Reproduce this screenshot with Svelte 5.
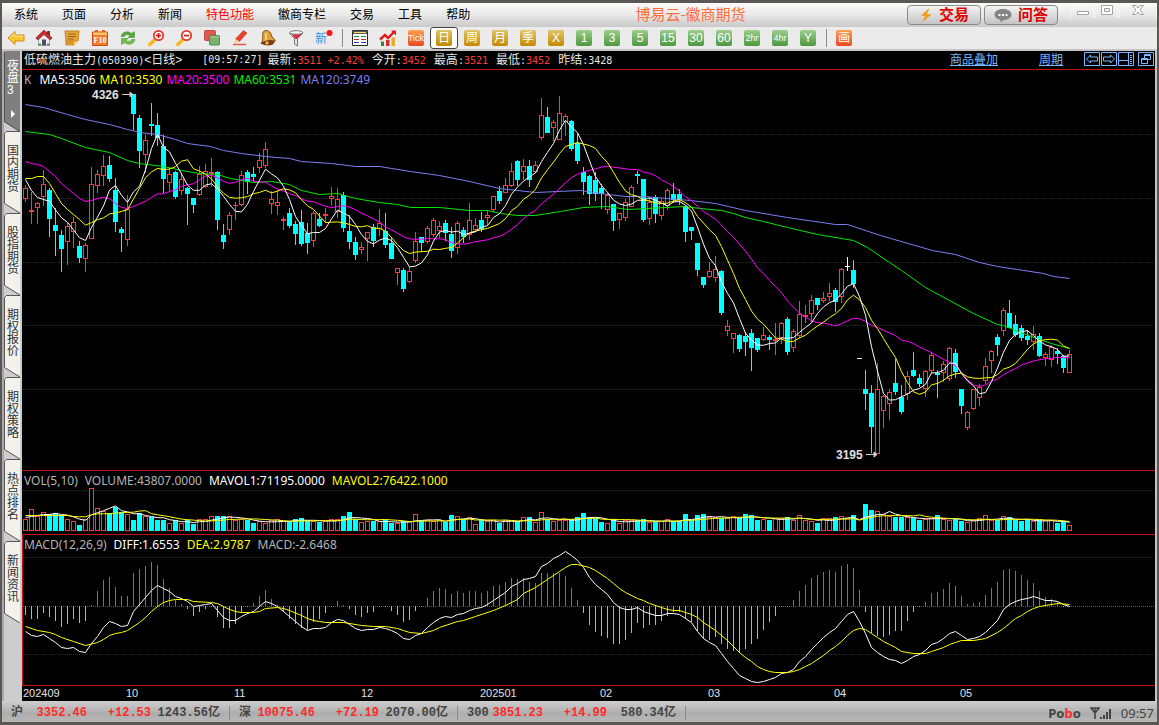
<script>
  const menus = ['系统', '页面', '分析', '新闻', '特色功能', '徽商专栏', '交易', '工具', '帮助'];

  const tools = [
    { kind: 'back', label: '后退' },
    { kind: 'home', label: '首页' },
    { kind: 'note', label: '公告' },
    { kind: 'f10', label: '基本资料' },
    { kind: 'refresh', label: '刷新' },
    { kind: 'zoomin', label: '放大' },
    { kind: 'zoomout', label: '缩小' },
    { kind: 'layers', label: '叠加' },
    { kind: 'pencil', label: '画线' },
    { kind: 'bell', label: '预警' },
    { kind: 'funnel', label: '筛选' },
    { kind: 'new', label: '新功能' },
    { kind: 'sep' },
    { kind: 'table', label: '报价表' },
    { kind: 'trend', label: '走势' },
    { kind: 'chip', tone: 'orange', text: 'Tick', narrow: true },
    { kind: 'chip', tone: 'gold', text: '日', on: true },
    { kind: 'chip', tone: 'gold', text: '周' },
    { kind: 'chip', tone: 'gold', text: '月' },
    { kind: 'chip', tone: 'gold', text: '季' },
    { kind: 'chip', tone: 'gold', text: 'X' },
    { kind: 'chip', tone: 'green', text: '1' },
    { kind: 'chip', tone: 'green', text: '3' },
    { kind: 'chip', tone: 'green', text: '5' },
    { kind: 'chip', tone: 'green', text: '15' },
    { kind: 'chip', tone: 'green', text: '30' },
    { kind: 'chip', tone: 'green', text: '60' },
    { kind: 'chip', tone: 'green', text: '2hr', narrow: true },
    { kind: 'chip', tone: 'green', text: '4hr', narrow: true },
    { kind: 'chip', tone: 'green', text: 'Y' },
    { kind: 'sep' },
    { kind: 'chip', tone: 'orange', text: '画' }
  ];

  const tabs = ['国内期货', '股指期货', '期权报价', '期权策略', '热点排名', '新闻资讯'];

  const quotes = [
    ['最新', '3511 +2.42%', true],
    ['今开', '3452', true],
    ['最高', '3521', true],
    ['最低', '3452', true],
    ['昨结', '3428', false]
  ];

  const indexes = [
    ['沪', '3352.46', '+12.53', '1243.56亿'],
    ['深', '10075.46', '+72.19', '2070.00亿'],
    ['300', '3851.23', '+14.99', '580.34亿']
  ];

  // Candles on the board: direction, high, body top, body bottom, low
  const candles = `r185,188,199,202 r192,210,212,224 r202,203,208,224 r170,184,197,206 c188,190,219,237
c208,225,231,256 c230,235,249,272 r223,226,242,265 r217,222,232,248 c241,246,258,263
r243,245,259,272 r167,184,239,239 r170,174,186,193 r155,166,176,186 c156,165,179,182
c178,190,222,232 c227,229,233,252 r195,209,240,246 c94,94,114,130 c115,118,151,168
r134,140,155,173 c103,124,126,136 c113,125,138,146 c135,146,179,193 r168,174,183,191
c171,172,197,199 r173,179,191,195 c187,188,194,225 c198,198,205,213 r166,174,195,196
r164,171,187,188 r158,172,174,187 c171,172,220,230 c224,235,242,249 r212,215,230,235
r202,205,206,220 r171,175,205,206 c170,172,182,194 c167,174,177,181 r153,160,168,173
r142,149,166,168 r191,199,204,214 r190,202,206,215 r217,219,221,230 c208,213,226,228
c221,224,234,245 c210,222,244,246 c223,233,243,254 r211,213,241,247 c213,219,226,227
r208,214,216,222 r187,196,199,206 r188,199,212,218 c192,195,228,232 c215,231,242,249
c237,242,255,260 r242,247,250,254 r232,232,239,261 c224,227,241,247 r209,223,229,236
c213,231,245,248 c237,243,259,259 r268,268,273,285 c268,270,289,292 r267,271,282,283
r232,241,261,263 c237,237,243,252 r226,228,242,244 r218,220,235,237 r221,226,231,238
c220,223,233,241 c227,234,251,258 r221,223,248,254 c227,230,237,243 r203,220,235,240
r218,225,230,232 c212,220,229,232 r210,215,218,225 r196,196,210,212 c186,191,201,204
r178,185,193,193 r163,171,186,187 c160,161,180,186 r159,166,172,180 c160,166,180,187
r161,165,172,173 r98,115,138,140 c107,117,133,133 r120,122,128,141 r96,113,140,140
r114,116,122,136 c120,121,149,151 c133,143,161,164 c167,172,182,195 c175,176,194,205
c172,180,194,201 c184,188,194,209 r193,195,210,214 c204,204,221,231 r213,213,220,229
r199,202,218,221 r185,187,207,207 c171,174,176,184 c179,179,220,222 r198,202,219,225
c195,197,214,223 r199,201,216,220 r188,190,206,210 c183,194,200,203 c189,194,200,205
c205,206,232,242 c227,227,231,240 c243,243,270,276 c277,277,285,288 r262,271,277,278
r256,269,278,282 c270,271,313,315 r320,326,331,336 r333,333,339,353 c334,335,349,352
c332,336,342,356 c329,333,348,371 c338,338,350,352 r327,335,340,341 c335,337,340,350
r323,339,341,355 r322,323,338,344 c317,319,352,355 r329,331,348,352 r301,314,336,338
r305,315,317,323 r295,300,314,322 c298,298,305,310 r292,298,301,303 r283,293,297,301
c288,290,302,312 r268,269,297,303 w257,266,267,271 c260,270,284,288 w358,358,359,359
c370,389,394,410 c385,393,427,453 r363,389,454,454 r395,396,411,428 r389,392,404,420
c359,383,392,395 c385,397,412,414 r371,376,394,400 c352,370,376,377 c374,378,384,387
r370,371,389,397 r352,355,371,373 c370,373,375,398 r361,364,373,382 r347,348,379,381
c349,353,372,378 c389,389,406,414 r411,412,428,430 r389,389,409,410 r384,387,398,406
r358,366,381,384 r350,351,361,373 c334,337,345,356 r308,310,331,336 c300,313,328,328
c315,324,335,337 c325,328,338,341 c330,336,340,345 r326,334,342,350 c333,336,356,357
r352,354,358,366 r345,347,360,367 c348,351,354,364 c355,356,368,373 r350,354,373,373`
    .split(/\s+/)
    .map((s) => {
      const [high, top, bottom, low] = s.slice(1).split(',').map(Number);
      return { dir: s[0], high, top, bottom, low, close: s[0] === 'r' ? top : bottom };
    });

  const volume = [
    519,509,516,512,514,513,515,519,521,525,519,488,508,511,513,507,512,514,520,513,
    516,517,520,520,523,520,523,520,524,519,519,516,516,516,516,520,519,520,523,521,
    523,520,519,521,521,519,518,520,521,522,521,519,519,516,512,519,522,521,521,521,
    520,523,523,521,521,514,521,520,521,520,522,515,516,519,517,524,520,521,520,523,
    520,520,521,517,517,522,512,519,521,520,520,519,517,513,517,518,522,523,519,523,
    520,520,520,519,522,521,521,519,521,521,514,520,515,514,517,517,518,518,516,518,
    514,515,520,519,520,518,518,517,520,515,520,521,523,518,518,517,516,518,515,530,
    504,510,511,514,516,517,517,517,518,520,519,518,515,519,520,519,521,522,520,518,
    515,520,520,516,517,520,521,520,521,520,520,520,523,521,525
  ];

  const hist = [
    615,619,619,613,617,621,627,624,619,623,621,605,591,580,577,587,596,596,573,569,
    566,562,565,579,588,600,604,609,616,612,609,607,617,628,628,624,613,607,603,596,
    590,599,605,612,619,624,628,630,622,619,613,607,601,605,609,615,617,613,612,607,
    607,611,615,622,620,611,606,598,591,588,589,594,591,593,591,591,593,591,586,585,
    582,578,579,578,582,583,573,573,573,573,576,588,600,613,625,632,636,638,644,644,
    640,633,623,628,625,625,621,616,612,612,619,622,631,639,640,637,644,649,651,653,
    649,644,639,630,622,616,607,607,600,591,585,578,575,572,570,572,566,564,568,590,
    612,633,636,637,635,631,631,621,612,607,602,593,592,589,583,586,596,604,603,602,
    595,588,582,570,569,571,575,580,583,591,597,599,602,607,607
  ];

  const diff = [
    631,635,636,634,638,642,647,648,647,651,652,643,636,627,621,623,626,625,611,604,
    597,590,585,588,591,596,598,601,606,605,604,603,610,617,620,620,616,613,611,606,
    601,603,606,611,616,621,626,630,628,628,627,622,619,620,624,628,630,629,629,627,
    628,630,633,638,639,635,633,627,622,618,616,617,614,613,610,608,607,604,600,596,
    592,586,583,579,578,576,566,563,558,555,551,555,560,567,577,584,589,594,602,607,
    609,609,607,611,613,615,615,613,613,614,618,622,631,638,642,645,653,661,668,675,
    678,681,682,681,679,677,673,672,669,661,656,649,643,637,632,628,621,614,611,621,
    633,647,652,656,659,660,663,660,656,654,650,644,642,638,633,631,635,639,638,636,
    632,626,620,609,604,601,599,598,596,598,600,600,601,604,606
  ];

  const dea = [
    [0,626],[2,630],[4,632],[5,634],[6,637],[8,641],[10,645],[12,642],[13,639],[14,635],[15,633],
    [16,632],[17,630],[19,622],[20,617],[21,611],[22,606],[23,602],[24,600],[25,599],[27,599],
    [28,601],[31,602],[32,603],[33,606],[34,609],[35,611],[36,612],[38,612],[39,611],[40,608],
    [42,607],[43,608],[44,610],[46,615],[47,618],[48,620],[49,621],[50,622],[53,622],[56,625],
    [58,626],[60,626],[62,628],[63,630],[64,632],[66,633],[68,630],[69,627],[72,621],[73,620],
    [75,616],[78,610],[80,605],[82,599],[83,593],[85,587],[87,579],[89,571],[90,567],[91,564],
    [92,564],[94,567],[95,570],[97,578],[98,583],[99,588],[100,592],[102,598],[103,600],[104,603],
    [106,607],[107,609],[108,610],[109,610],[111,614],[112,617],[113,622],[115,630],[117,640],
    [119,652],[120,657],[121,661],[122,666],[123,669],[124,671],[125,672],[127,672],[128,671],
    [129,669],[130,666],[131,663],[133,655],[134,650],[135,646],[136,641],[137,635],[138,630],
    [139,628],[140,629],[141,633],[142,637],[143,641],[144,644],[145,647],[146,651],[148,653],
    [150,653],[151,651],[153,647],[154,644],[155,642],[156,640],[158,640],[160,638],[162,632],
    [163,628],[164,623],[165,618],[166,615],[167,611],[168,608],[169,606],[170,605],[172,603],[174,604]
  ];

  const ma60 = '25,131 49,134 61,138 85,147 109,152 127,160 139,163 163,166 181,170 199,173 217,174 230,178 253,182 271,181 289,184 301,190 319,194 337,193 355,198 379,202 397,204 410,207 439,207 469,210 487,210 500,213 517,215 535,215 560,211 583,207 607,206 627,209 647,208 683,206 700,208 721,210 733,213 745,217 763,221 787,227 817,234 853,240 867,247 889,262 901,270 925,287 949,300 973,313 997,324 1003,325 1015,330 1039,339 1051,343 1069,348';
  const ma120 = '25,104 43,107 67,114 85,119 109,124 127,129 140,132 157,134 175,139 187,143 210,146 223,150 241,153 265,156 289,158 301,161 331,163 355,166 379,166 410,171 439,175 469,181 499,188 535,192 580,190 607,194 625,196 643,196 690,200 715,203 745,210 787,217 835,224 847,224 880,235 932,250 955,254 979,262 997,266 1017,269 1043,273 1053,276 1069,278';

  const months = [
    [23, '202409'], [126, '10'], [234, '11'], [361, '12'], [480, '202501'],
    [600, '02'], [708, '03'], [834, '04'], [960, '05']
  ];

  const cx = (i) => 25 + 6 * i;

  // Moving average over n bars; `lead` holds the values of the bars before n are available
  function average(values, n, lead) {
    return values.map((_, i) => {
      if (i < n - 1) return lead[i];
      let sum = 0;
      for (let k = i - n + 1; k <= i; k++) sum += values[k];
      return sum / n;
    });
  }

  const line = (ys) => ys.map((y, i) => `${cx(i)},${y.toFixed(1)}`).join(' ');

  const closes = candles.map((c) => c.close);
  const ma5 = line(average(closes, 5, [179, 190, 197, 199]));
  const ma10 = line(average(closes, 10, [178, 178, 176, 176, 183, 193, 203, 209, 214]));
  const ma20 = line(average(closes, 20, [161,163,164,166,171,176,183,188,193,198,201,200,198,197,198,203,207,208,206]));
  const vol5 = line(average(volume, 5, [517, 516, 515, 514]));
  const vol10 = line(average(volume, 10, [515, 515, 515, 515, 515, 515, 515, 515, 516]));
  const diffLine = line(diff);
  const deaLine = dea.map(([i, y]) => `${cx(i)},${y}`).join(' ');
</script>

{#snippet icon(kind)}
  <svg width="18" height="18" viewBox="0 0 18 18" aria-hidden="true">
    {#if kind === 'back'}
      <path d="M1 9 8 2.500V6H17v6H8v3.500z" fill="#fbc52c" stroke="#d08a1c" />
      <path d="M3 8.600 7.200 5V7.200H16" fill="none" stroke="#ffe9a0" />
    {:else if kind === 'home'}
      <path d="M3.500 8.500 9 4l5.500 4.500V16.500h-11z" fill="#ededf2" stroke="#a9a9b4" />
      <path d="M12 2h3v5h-3z" fill="#8b2c2c" />
      <path d="M.800 9 9 1l8.200 8-2.200 2L9 5.500 3 11z" fill="#c9302c" stroke="#7e1514" stroke-width=".600" />
      <path d="M7 10.500h4v6H7z" fill="#47506b" />
      <path d="M3 14.500h3v2H3zm9 0h3v2h-3z" fill="#5f9a4e" />
    {:else if kind === 'note'}
      <path d="M2 2h14l-1 10H3z" fill="#e6a63a" stroke="#c88322" />
      <path d="M2 12h9l3 1-3 3.500H2.500z" fill="#d9962e" />
      <path d="M14.500 12v2l-3.500 2.500V13z" fill="#f6cf7c" />
      <path d="M5 5h8M5 7.500h8M5 10h6" stroke="#9b6515" />
    {:else if kind === 'f10'}
      <path d="M1.500 3h3V1.500h2V3h5V1.500h2V3h3v13.500h-15z" fill="#f27a2a" stroke="#cf4d12" />
      <path d="M2 3.500h14v2.500H2z" fill="#ffc56b" />
      <text x="9" y="14" text-anchor="middle" font-family="Liberation Serif, serif" font-weight="bold" font-size="8" fill="#fff">F10</text>
    {:else if kind === 'refresh'}
      <path d="M2 7.500C3 2.500 9 1.500 12.500 4.500L15.500 2.500V8.500H9L11 6.500C9 5 6 5.500 5.300 7.500z" fill="#56a83a" stroke="#3f8f2c" stroke-width=".500" />
      <path d="M16 10.500C15 15.500 9 16.500 5.500 13.500L2.500 15.500V9.500H9L7 11.500C9 13 12 12.500 12.700 10.500z" fill="#74c04c" stroke="#3f8f2c" stroke-width=".500" />
    {:else if kind === 'zoomin' || kind === 'zoomout'}
      <path d="M7 11.500 2.800 15.500" stroke="#f5b91c" stroke-width="3.600" stroke-linecap="round" />
      <circle cx="11.500" cy="6.500" r="4.700" fill="#fff" stroke="#e0392f" stroke-width="1.800" />
      <path d="M9 6.500h5" stroke="#d42218" stroke-width="1.800" />
      {#if kind === 'zoomin'}<path d="M11.500 4v5" stroke="#d42218" stroke-width="1.800" />{/if}
    {:else if kind === 'layers'}
      <rect x="1.500" y="1.500" width="11" height="10" rx="1" fill="#dc5a50" stroke="#c84a44" />
      <rect x="6.500" y="6.500" width="10" height="9.500" rx="1" fill="#7ab070" stroke="#4f8f4c" />
      <path d="M7.500 8h8" stroke="#a7d39c" />
    {:else if kind === 'pencil'}
      <path d="M4.500 10 12.500 1.500 16 4 8.500 12.500z" fill="#e8402c" stroke="#b02416" stroke-width=".500" />
      <path d="M4.500 10 8.500 12.500l-6 2.500z" fill="#f3cf9c" />
      <path d="M2 15.500h13" stroke="#e2574a" stroke-width="1.500" />
    {:else if kind === 'bell'}
      <path d="M4.500 2.500C8 0 12 2.500 12.500 7L16.500 12 11 15.500 2 14.500C5 12 2.500 6 4.500 2.500z" fill="#e0a23a" stroke="#8a4c14" />
      <path d="M2 14c3.500-3 10-4 14-2l-2 3.500c-4 1.500-8 1.500-12-1.500z" fill="#7c3d1a" />
      <path d="M6.500 4c1 2.500 1 5 0 7.500" stroke="#ffe08c" stroke-width="1.500" fill="none" />
      <circle cx="8" cy="14" r="1.700" fill="#f4b53a" />
    {:else if kind === 'funnel'}
      <path d="M2.500 4l5 5.500v5.500l3 2V9.500L16 4z" fill="#e4e4e8" stroke="#75757c" />
      <path d="M4.500 5h10L10 10H8.500z" fill="#e32c3c" />
      <ellipse cx="9.200" cy="3.500" rx="6.500" ry="1.800" fill="#f6f6f6" stroke="#75757c" />
    {:else if kind === 'new'}
      <text x="0" y="14" font-family="Noto Sans CJK SC, sans-serif" font-size="12" fill="#3d8fe6">新</text>
      <circle cx="14.500" cy="4" r="3" fill="#f11" />
    {:else if kind === 'table'}
      <path d="M1.500 1.500h15v15h-15z" fill="#fff" stroke="#2b2b2b" />
      <path d="M2 2h14v3H2z" fill="#5b5b52" /><path d="M3 3.500h12" stroke="#f3df78" />
      <path d="M3 7.500h5M10 7.500h5" stroke="#188a2c" /><path d="M3 10.500h5M10 10.500h5" stroke="#d22" /><path d="M3 13.500h5M10 13.500h5" stroke="#23c" />
    {:else}
      <path d="M2 12.500h3V17H2z" fill="#2f8a3a" /><path d="M7 11h3.500v6H7z" fill="#d6302a" /><path d="M12.500 8.500H16V17h-3.500z" fill="#e9a92a" />
      <path d="M1 10.500 6 6l3 3 6.500-6.500" fill="none" stroke="#e31818" stroke-width="2.400" />
      <path d="M12 1.500h5v5z" fill="#e31818" />
    {/if}
  </svg>
{/snippet}

{#snippet grid(rows, start, bright)}
  {#each rows as y}
    <line x1={start} x2="100%" y1={y + 0.5} y2={y + 0.5} class="grid" class:bright={y === bright} />
  {/each}
{/snippet}

<div class="frame">
  <header class="title">
    <nav class="menu" aria-label="主菜单">
      {#each menus as m}
        <button type="button" class:hot={m === '特色功能'}>{m}</button>
      {/each}
    </nav>
    <h1>博易云-徽商期货</h1>
    <div class="actions">
      <button type="button" class="pill">
        <svg width="14" height="16" viewBox="0 0 14 16" aria-hidden="true"><path d="M10.500 1 2 8.500l4 .500L3 15.500 12.500 7.500 8 7z" fill="#f49a1c" /></svg>
        交易
      </button>
      <button type="button" class="pill">
        <svg width="18" height="15" viewBox="0 0 18 15" aria-hidden="true">
          <path d="M9 1c5 0 8.500 2.400 8.500 5.500S14 12 9.500 12L7 14.500 6 11.700C3 11 .5 9.200 .5 6.500.5 3.400 4 1 9 1z" fill="#858585" />
          <path d="M4.500 6h2v2h-2zm3.500 0h2v2H8zm3.500 0h2v2h-2z" fill="#fff" />
        </svg>
        问答
      </button>
    </div>
    <div class="window">
      <button type="button" aria-label="最小化"><svg width="14" height="14" viewBox="0 0 14 14"><path d="M1.500 7.500h11v3h-11z" fill="#fff" stroke="#a2a2a2" /></svg></button>
      <button type="button" aria-label="还原"><svg width="14" height="14" viewBox="0 0 14 14"><path d="M1.500 1.500h11v9h-11zM4.500 4.500h5v3h-5z" fill="#fff" fill-rule="evenodd" stroke="#a2a2a2" /></svg></button>
      <button type="button" aria-label="关闭"><svg width="14" height="14" viewBox="0 0 14 14"><path d="M1.500 1.500H5L7 4l2-2.500h3.500L9 6l3.500 4.500H9L7 8l-2 2.500H1.500L5 6z" fill="#fff" stroke="#a2a2a2" /></svg></button>
    </div>
  </header>

  <div class="toolbar" role="toolbar" aria-label="工具栏">
    {#each tools as t}
      {#if t.kind === 'sep'}
        <span class="sep"></span>
      {:else if t.kind === 'chip'}
        <button type="button" class="tool" class:on={t.on}><span class="chip {t.tone}" class:narrow={t.narrow}>{t.text}</span></button>
      {:else}
        <button type="button" class="tool" aria-label={t.label}>{@render icon(t.kind)}</button>
      {/if}
    {/each}
  </div>

  <div class="work">
    <nav class="side" aria-label="板块">
      <button type="button" class="tab active">
        <svg width="16" height="81" viewBox="0 0 16 81" aria-hidden="true">
          <path d="M16 0H2Q0 0 0 2V71L16 81z" fill="#7f7f7f" /><path d="M.5 1v69.700L16 80.500" fill="none" stroke="#555" />
          <path d="M7 59v8l4-4z" fill="#fff" />
        </svg>
        <span>夜盘3</span>
      </button>
      {#each tabs as t}
        <button type="button" class="tab">
          <svg width="16" height="82" viewBox="0 0 16 82" aria-hidden="true">
            <path d="M16 .5H2.500L.5 2.500V72.500L16 82" fill="#f2f2ea" stroke="#555" />
          </svg>
          <span>{t}</span>
        </button>
      {/each}
    </nav>

    <main>
      <div class="info">
        <span>低硫燃油主力<b>(050390)</b></span><span class="period">&lt;日线&gt;</span>
        <b class="clock">[09:57:27]</b>
        {#each quotes as [name, value, up]}
          <span class="quote">{name}<b>:</b><b class:up>{value}</b></span>
        {/each}
        <a href="#overlay" class="first">商品叠加</a>
        <a href="#period" class="second">周期</a>
        <div class="views">
          <button type="button" aria-label="向左"><svg width="16" height="14" viewBox="0 0 16 14"><path d="M.5 .5h15v13H.5z" /><path d="M2.500 7 6.500 3v2h7v4h-7v2z" /></svg></button>
          <button type="button" aria-label="向右"><svg width="16" height="14" viewBox="0 0 16 14"><path d="M.5 .5h15v13H.5z" /><path d="M13.500 7 9.500 3v2h-7v4h7v2z" /></svg></button>
          <button type="button" aria-label="分栏"><svg width="16" height="14" viewBox="0 0 16 14"><path d="M.5 .5h15v13H.5zM.5 8.500h10V.5v13M12 3.500h2M12 5.500h2M12 7.500h2M12 9.500h2M12 11.500h2" /></svg></button>
          <button type="button" aria-label="窗口"><svg width="16" height="14" viewBox="0 0 16 14"><path d="M.5 .5h15v13H.5zM6.500 6V2.500h6v5H10M6.500 3.500h6M3.500 6.500h6v5h-6zM3.500 7.500h6" /></svg></button>
        </div>
      </div>

      <section class="panel price">
        <p class="legend"><span class="k">K</span><span class="w">MA5:3506</span><span class="y">MA10:3530</span><span class="m">MA20:3500</span><span class="g">MA60:3531</span><span class="v">MA120:3749</span></p>
        <svg width="100%" height="382" role="img" aria-label="日线K线图">
          <g transform="translate(0 -88)">{@render grid([134, 198, 262, 325, 389], 1, 0)}</g>
          <g transform="translate(-22 -88)">
            {#each candles as c, i}
              <g class={c.dir}>
                {#if c.dir === 'r'}
                  <rect x={cx(i)} y={c.high} width="1" height={c.top - c.high} />
                  <rect x={cx(i)} y={c.bottom} width="1" height={c.low - c.bottom} />
                  {#if c.bottom - c.top < 3}
                    <rect x={cx(i) - 2} y={c.top} width="5" height={c.bottom - c.top} />
                  {:else}
                    <rect class="hollow" x={cx(i) - 1.5} y={c.top + 0.5} width="4" height={c.bottom - c.top - 1} />
                  {/if}
                {:else}
                  <rect x={cx(i)} y={c.high} width="1" height={c.low - c.high} />
                  <rect x={cx(i) - 2} y={c.top} width="5" height={c.bottom - c.top} />
                {/if}
              </g>
            {/each}
            <g class="lines" transform="translate(.5 .5)">
              <polyline points={ma120} stroke="#7d7df5" />
              <polyline points={ma60} stroke="#00e600" />
              <polyline points={ma20} stroke="#f0f" />
              <polyline points={ma10} stroke="#ff0" />
              <polyline points={ma5} stroke="#fff" />
            </g>
            <g class="mark">
              <text x="92" y="99">4326</text>
              <path d="M122 94.500h10M130 92l3 2.500-3 2.500z" />
              <text x="836" y="459">3195</text>
              <path d="M866 454.500h10M874 452l3 2.500-3 2.500z" />
            </g>
          </g>
        </svg>
      </section>

      <section class="panel">
        <p class="legend wide"><span>VOL(5,10)</span><span>VOLUME:43807.0000</span><span class="w">MAVOL1:71195.0000</span><span class="y">MAVOL2:76422.1000</span></p>
        <svg width="100%" height="45" role="img" aria-label="成交量">
          <g transform="translate(0 -489)">{@render grid([490], 1, 0)}</g>
          <g transform="translate(-22 -489)">
            {#each volume as v, i}
              {#if candles[i].dir === 'c'}
                <rect class="c" x={cx(i) - 2} y={v} width="5" height={531 - v} />
              {:else}
                <rect class="r hollow" x={cx(i) - 1.5} y={v + 0.5} width="4" height={530 - v} />
              {/if}
            {/each}
            <g class="lines" transform="translate(.5 .5)">
              <polyline points={vol5} stroke="#fff" />
              <polyline points={vol10} stroke="#ff0" />
            </g>
          </g>
        </svg>
      </section>

      <section class="panel macd">
        <p class="legend wide"><span>MACD(12,26,9)</span><span class="w">DIFF:1.6553</span><span class="y">DEA:2.9787</span><span>MACD:-2.6468</span></p>
        <svg width="100%" height="132" role="img" aria-label="MACD">
          <g transform="translate(0 -553)">{@render grid([557, 606, 654], 0, 606)}</g>
          <g transform="translate(-23 -553)">
            {#each hist as h, i}
              <rect class={h < 606 ? 'r' : 'c'} x={cx(i)} y={Math.min(h, 606)} width="1" height={Math.max(1, Math.abs(h - 606))} />
            {/each}
            <g class="lines" transform="translate(.5 .5)">
              <polyline points={diffLine} stroke="#fff" />
              <polyline points={deaLine} stroke="#ff0" />
            </g>
          </g>
        </svg>
      </section>

      <svg class="axis" width="100%" height="15" role="img" aria-label="日期">
        {#each months as [x, label]}
          <text x={x - 22} y="11">{label}</text>
        {/each}
      </svg>
    </main>
  </div>

  <footer>
    {#each indexes as [name, value, change, amount]}
      <div class="index">
        <span class="name">{name}</span>
        <span class="up">{value}</span>
        <span class="up">{change}</span>
        <span>{amount}</span>
      </div>
    {/each}
    <div class="status">
      <strong>Po<em>b</em>o</strong>
      <svg width="22" height="13" viewBox="0 0 22 13" aria-hidden="true">
        <path d="M0 1h10M1 1l4 5 4-5M5 1v11" fill="none" stroke="#444" stroke-width="1.600" />
        <path d="M10 10h2v2h-2zm3-2h2v4h-2zm3-3h2v7h-2zm3-3h2v10h-2z" fill="#444" />
      </svg>
      <time>09:57</time>
    </div>
  </footer>
</div>

<style>
  :global(body) { background: #000; }
  .frame {
    box-sizing: border-box;
    min-height: 100vh;
    display: flex;
    flex-direction: column;
    border: 2px solid #5a5656;
    border-width: 3px 2px;
    background: #c9c4c4;
    font: 12px/14px "Liberation Sans", "Noto Sans CJK SC", sans-serif;
    overflow: hidden;
  }
  button { margin: 0; padding: 0; border: 0; background: none; font: inherit; color: inherit; display: flex; align-items: center; justify-content: center; white-space: nowrap; }
  p, h1 { margin: 0; font-weight: normal; }
  svg { display: block; flex: none; }

  .title { display: flex; align-items: center; height: 24px; background: linear-gradient(#fbfbfb, #e8e8e8 50%, #c9c9c9); }
  .menu { display: flex; gap: 24px; padding-left: 12px; color: #000; }
  .menu .hot { color: #f00; }
  h1 { flex: 1; padding-left: 4px; text-align: center; font-size: 15px; line-height: 20px; color: #ff6d3a; }
  .actions { display: flex; gap: 3px; }
  .pill { box-sizing: border-box; width: 74px; height: 20px; gap: 6px; border: 1px solid #8a8a8a; border-radius: 4px; background: linear-gradient(#f4f4f4, #c4c4c4); color: #e00000; font-size: 15px; font-weight: bold; }
  .window { display: flex; align-self: start; gap: 1px; padding-left: 13px; }
  .window button { box-sizing: border-box; width: 23px; height: 15px; border-left: 1px solid #f4f4f4; border-right: 1px solid #f4f4f4; }
  .window button:last-child { width: 38px; }

  .toolbar { display: flex; height: 22px; background: #ebebeb; border-bottom: 2px solid #c9c4c4; }
  .tool { width: 28px; height: 22px; box-sizing: border-box; flex: none; }
  .tool.on { border: 1px solid #444; border-radius: 3px; background: #fff; }
  .sep { width: 1px; height: 18px; margin: 2px 3px 2px 4px; background: #8a8a8a; flex: none; }
  .chip { width: 16px; height: 16px; border-radius: 2px; display: flex; align-items: center; justify-content: center; color: #fff; font-size: 12px; line-height: 16px; }
  .chip.narrow { font-size: 9px; }
  .gold { background: linear-gradient(#dfc467, #c48a00); }
  .green { background: linear-gradient(#9bce8c, #4d983f); }
  .orange { background: linear-gradient(#ffa04e, #ea4a22); }

  .work { display: flex; flex: 1; }
  .side { width: 20px; flex: none; box-sizing: border-box; padding-left: 2px; display: flex; flex-direction: column; background: linear-gradient(90deg, #a9a9a9 2px, #cdcdcf 2px); }
  .tab { display: grid; justify-content: start; align-items: start; height: 82px; color: #333; }
  .tab.active { height: 80px; color: #fff; }
  .tab svg, .tab span { grid-area: 1 / 1; }
  .tab span { width: 12px; margin: 14px 0 0 3px; line-height: 12px; white-space: normal; word-break: break-all; text-align: left; }
  .tab.active span { margin-top: 9px; }

  main { flex: 1; min-width: 0; display: flex; flex-direction: column; background: #000; margin-right: 2px; color: #e6e6e6; overflow: hidden; }
  .info { display: flex; align-items: center; height: 18px; padding: 0 1px 0 2px; border-bottom: 1px solid #c01408; white-space: nowrap; }
  .info b { font: 10px/14px "DejaVu Sans Mono", monospace; }
  .info .period { font-size: 12px; margin-right: 20px; }
  .info .clock { margin-right: 5px; }
  .quote { margin-right: 8px; }
  .info .up { color: #ff3c3c; }
  .info a { color: #7ab8ff; text-underline-offset: 1px; }
  .info .first { margin-left: auto; }
  .info .second { margin-left: 41px; }
  .views { display: flex; gap: 1px; margin-left: 21px; align-self: flex-start; padding-top: 1px; }
  .views button:last-child { margin-left: 3px; }
  .views path { fill: none; stroke: #7ab8ff; }

  .panel { border-bottom: 1px solid #c01408; }
  .panel.price { flex: 1; }
  .panel.macd { border-left: 1px solid #c01408; }
  .panel svg { overflow: visible; }
  .legend { display: flex; gap: 4px; height: 18px; padding-left: 2px; font: 12px/19px "Noto Sans", sans-serif; color: #b4b4b4; white-space: nowrap; }
  .legend.wide { gap: 7px; }
  .macd .legend { padding-left: 1px; }
  .legend .k { margin-right: 4px; }
  .legend .w { color: #fff; }
  .legend .y { color: #ff0; }
  .legend .m { color: #f0f; }
  .legend .g { color: #00f000; }
  .legend .v { color: #7d7df5; }

  .grid { stroke: #8c0000; stroke-dasharray: 1 1; }
  .grid.bright { stroke: #e02020; }
  .r { fill: #ff3c3c; }
  .c { fill: #0ff; }
  .w rect { fill: #fff; }
  .hollow { fill: #000; stroke: #ff3c3c; }
  .lines polyline { fill: none; stroke-width: 1; }
  .mark text { font: bold 12px "Liberation Sans", sans-serif; fill: #e0e0e0; }
  .mark path { stroke: #d0d0d0; fill: #d0d0d0; }
  .axis text { font: 11px "Liberation Sans", sans-serif; fill: #e0e0e0; }

  footer { display: flex; align-items: center; box-sizing: border-box; height: 21px; padding-top: 3px; background: linear-gradient(#cecece, #adadad 60%, #b8b8b8); color: #444; }
  .index { display: grid; grid-template-columns: 24px 52px 64px 69px; align-items: center; box-sizing: border-box; width: 228px; height: 14px; padding-left: 9px; border-right: 1px solid #8a8a8a; font: bold 12px/14px "Liberation Mono", "Noto Sans CJK SC", monospace; }
  .index span { white-space: nowrap; display: flex; justify-content: flex-end; }
  .index .name { justify-content: flex-start; }
  .index .up, em { color: #ff2a2a; }
  .status { display: flex; align-items: center; gap: 9px; margin-left: auto; padding-right: 3px; font: 13px/16px "Noto Sans", sans-serif; }
  em { font-style: normal; }
</style>
